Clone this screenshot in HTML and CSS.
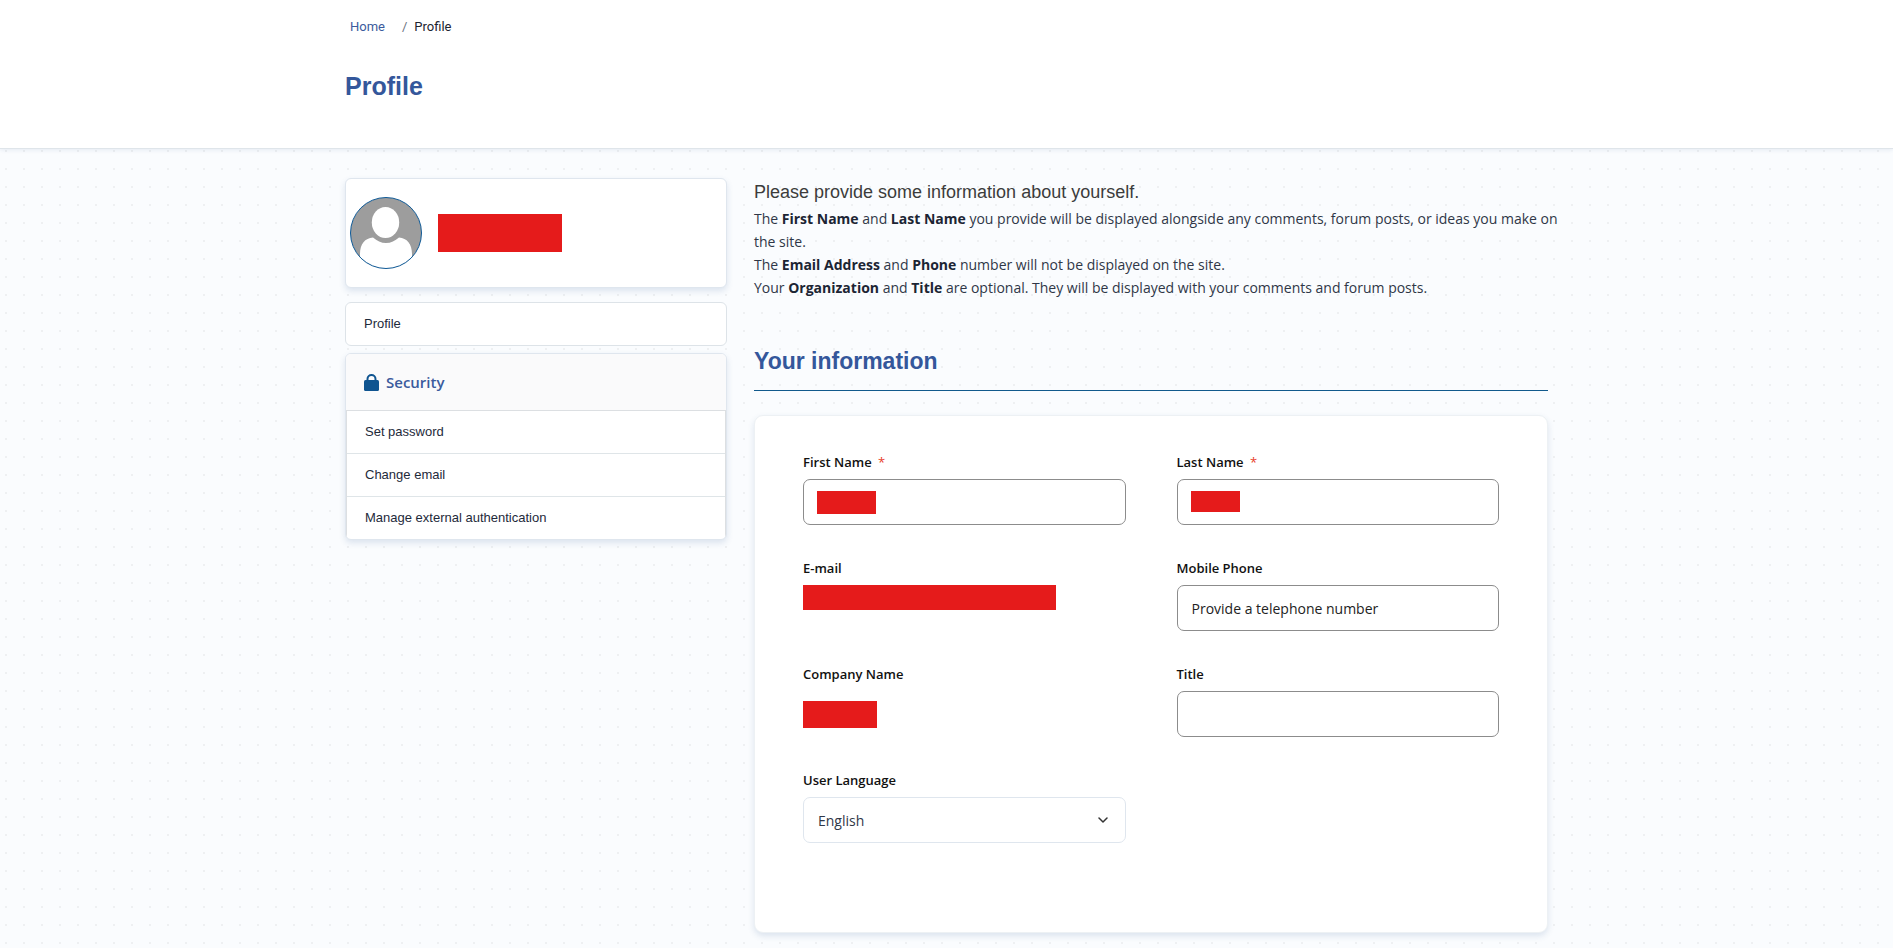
FILE: index.html
```html
<!DOCTYPE html>
<html lang="en">
<head>
<meta charset="UTF-8">
<meta name="viewport" content="width=device-width, initial-scale=1.0">
<title>Profile</title>
<link rel="stylesheet" href="styles.css">
</head>
<body>
  <header class="page-header">
    <div class="container">
      <nav aria-label="Breadcrumb">
        <ul class="breadcrumb">
          <li><a href="#">Home</a></li>
          <li class="active">Profile</li>
        </ul>
      </nav>
      <h1>Profile</h1>
    </div>
  </header>

  <div class="container columns">
    <aside class="sidebar">
      <div class="card user-card">
        <svg class="avatar" viewBox="0 0 72 72" aria-hidden="true">
          <defs>
            <clipPath id="avatar-clip"><circle cx="36" cy="36" r="35.5"/></clipPath>
          </defs>
          <g clip-path="url(#avatar-clip)">
            <rect width="72" height="72" fill="#9d9d9d"/>
            <ellipse cx="35.5" cy="25.5" rx="13.7" ry="15.5" fill="#fff"/>
            <path d="M10 72V57C10 47 15 41 23 40.500C27 44 31 46 36 46S45 44 49 40.500C57 41 62 47 62 57V72Z" fill="#fff"/>
          </g>
          <circle cx="36" cy="36" r="35.5" fill="none" stroke="#0f5a97"/>
        </svg>
        <span class="redacted redacted-user"></span>
      </div>

      <a class="nav-profile" href="#">Profile</a>

      <div class="card security">
        <div class="security-header">
          <svg class="lock" viewBox="0 0 15 17" aria-hidden="true">
            <path d="M3.5 8V5A4 4 0 0 1 11.500 5V8" fill="none" stroke="#0f5490" stroke-width="2"/>
            <rect y="6" width="15" height="11" rx="1.5" fill="#0f5490"/>
          </svg>
          <h2>Security</h2>
        </div>
        <div class="security-links">
          <a href="#">Set password</a>
          <a href="#">Change email</a>
          <a href="#">Manage external authentication</a>
        </div>
      </div>
    </aside>

    <main class="main">
      <div class="intro">
        <p class="lead">Please provide some information about yourself.</p>
        <p>The <b>First Name</b> and <b>Last Name</b> you provide will be displayed alongside any comments, forum posts, or ideas you make on the site.</p>
        <p>The <b>Email Address</b> and <b>Phone</b> number will not be displayed on the site.</p>
        <p>Your <b>Organization</b> and <b>Title</b> are optional. They will be displayed with your comments and forum posts.</p>
      </div>

      <h2 class="section-title">Your information</h2>

      <form class="card info-form">
        <div class="field">
          <label for="first-name">First Name <span class="required">*</span></label>
          <div class="control">
            <input type="text" id="first-name">
            <span class="redacted redacted-first"></span>
          </div>
        </div>
        <div class="field">
          <label for="last-name">Last Name <span class="required">*</span></label>
          <div class="control">
            <input type="text" id="last-name">
            <span class="redacted redacted-last"></span>
          </div>
        </div>
        <div class="field">
          <span class="label">E-mail</span>
          <span class="redacted redacted-email"></span>
        </div>
        <div class="field">
          <label for="phone">Mobile Phone</label>
          <input type="tel" id="phone" placeholder="Provide a telephone number">
        </div>
        <div class="field">
          <span class="label">Company Name</span>
          <div class="static"><span class="redacted redacted-company"></span></div>
        </div>
        <div class="field">
          <label for="title">Title</label>
          <input type="text" id="title">
        </div>
        <div class="field">
          <label for="language">User Language</label>
          <div class="control">
            <select id="language">
              <option>English</option>
            </select>
            <svg class="chevron" viewBox="0 0 10 6" aria-hidden="true">
              <path d="M1 1L5 5L9 1" fill="none" stroke="#333" stroke-width="1.5" stroke-linecap="round" stroke-linejoin="round"/>
            </svg>
          </div>
        </div>
      </form>
    </main>
  </div>
</body>
</html>
```

FILE: styles.css
```css
* {
  box-sizing: border-box;
}

body {
  margin: 0;
  font-family: "Open Sans", sans-serif;
  font-size: 14px;
  line-height: 23px;
  color: #2f3747;
  background-color: #fafcfe;
  background-image: radial-gradient(circle at 6px 7px, #eef0f2 1px, transparent 1px);
  background-size: 18px 18px;
}

h1, h2, p, ul {
  margin: 0;
  padding: 0;
}

a {
  text-decoration: none;
}

.container {
  max-width: 1203px;
  margin: 0 auto;
}

/* header */
.page-header {
  height: 149px;
  padding-top: 17px;
  background: #fff;
  border-bottom: 1px solid #dfe5ea;
  box-shadow: 0 1px 4px rgba(40, 80, 140, 0.1);
}

.breadcrumb {
  display: flex;
  list-style: none;
  padding-left: 5px;
  font-family: Roboto, sans-serif;
  font-size: 13px;
  line-height: 20px;
}

.breadcrumb a {
  color: #3b5b9d;
}

.breadcrumb .active {
  padding-left: 17px;
  color: #1c2430;
}

.breadcrumb .active::before {
  content: "/";
  padding-right: 7px;
  color: #6b7280;
}

.page-header h1 {
  margin-top: 34px;
  font-family: "Liberation Sans", Arial, sans-serif;
  font-size: 25px;
  line-height: 30px;
  color: #34579b;
}

/* layout */
.columns {
  display: grid;
  grid-template-columns: 382px 1fr;
  gap: 27px;
  padding: 29px 0 16px;
}

.card {
  background: #fff;
  border: 1px solid #dfe6ee;
  border-radius: 6px;
  box-shadow: 0 3px 6px rgba(50, 90, 150, 0.15);
}

.redacted {
  display: block;
  background: #e51b1b;
}

/* sidebar */
.user-card {
  display: flex;
  align-items: center;
  gap: 16px;
  height: 110px;
  padding: 0 4px;
}

.avatar {
  width: 72px;
  height: 72px;
}

.redacted-user {
  width: 124px;
  height: 38px;
}

.nav-profile {
  display: block;
  margin: 14px 0 7px;
  padding: 10px 18px;
  border: 1px solid #dde3e8;
  border-radius: 6px;
  background: #fff;
  font-family: "Liberation Sans", Arial, sans-serif;
  font-size: 13px;
  line-height: 22px;
  color: #1e2a3a;
}

.security {
  overflow: hidden;
}

.security-header {
  display: flex;
  align-items: center;
  gap: 7px;
  height: 56px;
  padding-left: 18px;
  background: #fafafb;
}

.security-header h2 {
  font-size: 15px;
  font-weight: 600;
  color: #3b5b9d;
}

.lock {
  width: 15px;
  height: 17px;
}

.security-links {
  border: 1px solid #dcdfe2;
  border-bottom: 0;
}

.security-links a {
  display: block;
  padding: 10px 18px;
  font-family: "Liberation Sans", Arial, sans-serif;
  font-size: 13px;
  line-height: 22px;
  color: #1e2a3a;
}

.security-links a + a {
  border-top: 1px solid #dfe5e8;
}

/* main */
.intro {
  margin-right: -12px;
}

.intro .lead {
  font-family: "Liberation Sans", Arial, sans-serif;
  font-size: 18px;
  line-height: 29px;
  color: #3c3c3c;
}

.intro b {
  color: #1c2534;
}

.section-title {
  margin-top: 47px;
  padding-bottom: 14px;
  border-bottom: 1px solid #115a8c;
  font-family: "Liberation Sans", Arial, sans-serif;
  font-size: 23px;
  line-height: 30px;
  color: #34579b;
}

.info-form {
  display: grid;
  grid-template-columns: 1fr 1fr;
  column-gap: 51px;
  row-gap: 31px;
  margin-top: 24px;
  padding: 34px 48px 89px;
  border-color: #edf1f4;
  border-radius: 9px;
}

.field label,
.field .label {
  display: block;
  margin-bottom: 5px;
  font-size: 13px;
  font-weight: 600;
  line-height: 24px;
  color: #111;
}

.required {
  margin-left: 3px;
  font-weight: 400;
  color: #e8402a;
}

.control {
  position: relative;
}

.field input,
.field select {
  display: block;
  width: 100%;
  height: 46px;
  padding: 0 14px;
  border: 1px solid #8c8c8c;
  border-radius: 7px;
  background: #fff;
  font-family: "Open Sans", sans-serif;
  font-size: 14px;
  color: #2f3747;
}

.field input::placeholder {
  color: #222;
}

.field select {
  appearance: none;
  border-color: #dfe6ee;
}

.chevron {
  position: absolute;
  top: 20px;
  right: 18px;
  width: 10px;
  height: 6px;
  pointer-events: none;
}

.control .redacted {
  position: absolute;
  top: 12px;
  left: 14px;
}

.redacted-first {
  width: 59px;
  height: 23px;
}

.redacted-last {
  width: 49px;
  height: 21px;
}

.redacted-email {
  width: 253px;
  height: 25px;
}

.static {
  display: flex;
  align-items: center;
  height: 46px;
}

.redacted-company {
  width: 74px;
  height: 27px;
}
```
